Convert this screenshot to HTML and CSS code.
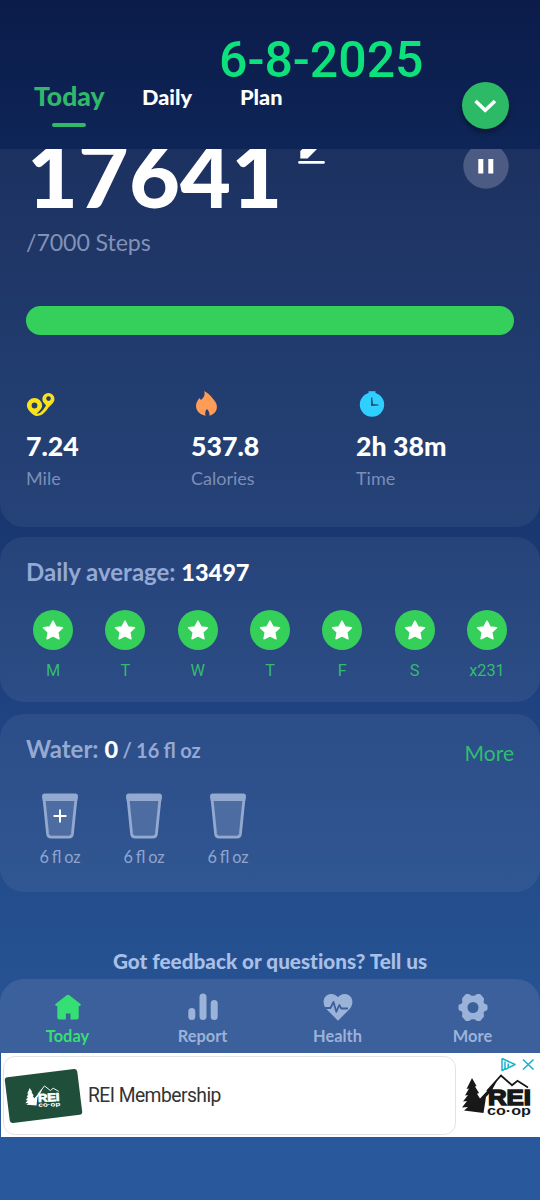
FILE: index.html
```html
<!DOCTYPE html>
<html lang="en">
<head>
<meta charset="utf-8">
<title>Steps</title>
<link rel="stylesheet" href="styles.css">
</head>
<body>
<svg width="0" height="0" class="defs">
  <symbol id="star" viewBox="0 0 40 40"><path d="M20 11l3 5.900 6.500.9-4.700 4.500 1.200 6.500-6-3-6 3 1.200-6.500-4.700-4.500 6.500-.9z" fill="#fff" stroke="#fff" stroke-width="1.400" stroke-linejoin="round"/></symbol>
  <symbol id="glass" viewBox="0 0 36 46"><path d="M3 5H33L29.500 42H6.500z" fill="#4d6ca2"/><path d="M1.800 3.500L5.600 41q.4 3 3.400 3h18q3 0 3.400-3L34.200 3.500" fill="none" stroke="#94a9cf" stroke-width="2.800"/><path d="M3 .5h30q3 0 3 3L35.200 8H.8L0 3.500q0-3 3-3z" fill="#94a9cf"/></symbol>
  <symbol id="rei-peaks" viewBox="0 0 76 44">
    <path d="M27 18L41 2.500l11 9.700 5.500-4.400L68 14.500" fill="none" stroke="currentColor" stroke-width="1.800"/>
    <path d="M12 5l4.500 8-1.500.5 4 6.500-2 .7 3 4.800L29 16l9-10-6.500 12L26 24l-2.500 16L4 37.500l4-3.500-6 .5L7 28l-4 .5L8 22l-3 .5L9 15.500l-2.500.5z" fill="currentColor"/>
  </symbol>
</svg>
<div class="screen">
  <header class="header">
    <div class="date">6-8-2025</div>
    <nav class="tabs">
      <span class="tab active">Today</span>
      <span class="tab daily">Daily</span>
      <span class="tab">Plan</span>
    </nav>
    <button class="expand" aria-label="Expand"><svg width="47" height="47" viewBox="0 0 47 47"><path d="M13.500 19l9.700 9.200L33 19" fill="none" stroke="#fff" stroke-width="3.600"/></svg></button>
  </header>

  <section class="card steps">
    <div class="count-row">
      <div class="count">17641</div>
      <svg class="edit" width="27" height="28" viewBox="0 0 27 28"><path d="M2.300 22.500V15L5 12.500 10 7h15L9.500 22.500z" fill="#fff"/><path d="M1.500 26.400h24" stroke="#fff" stroke-width="2.600" stroke-linecap="round"/></svg>
      <svg class="pause" width="46" height="46" viewBox="0 0 46 46"><circle cx="23" cy="23" r="22.700" fill="#4b5b83"/><path d="M15.300 16h5v14.500h-5zM25.300 16h5v14.500h-5z" fill="#fff"/></svg>
    </div>
    <div class="goal">/7000 Steps</div>
    <div class="progress"></div>
    <div class="metrics">
      <div class="metric">
        <svg width="30" height="30" viewBox="0 0 30 30"><path fill-rule="evenodd" fill="#f9e219" d="M8.500 9a7.600 7.600 0 0 1 7.600 7.600c0 3.500-3.300 6-5.600 8.300 5-.3 7-5 9.700-8.400-2.200-2.300-3.900-4.200-3.900-6.500a6.100 6.100 0 1 1 12.200 0c0 3.600-3.700 6-6.200 8.700-2.500 4-6 8.200-11.600 8.300-3.300 0-9.800-6-9.800-10.400A7.600 7.600 0 0 1 8.500 9zm0 4.600a2.900 2.900 0 1 0 0 5.800 2.900 2.900 0 0 0 0-5.800zM22.500 7.300a2.300 2.300 0 1 0 0 4.600 2.300 2.300 0 0 0 0-4.600z"/></svg>
        <b>7.24</b><span>Mile</span>
      </div>
      <div class="metric">
        <svg width="30" height="30" viewBox="0 0 30 30"><path fill="#ff9c57" d="M13 2c5 2.300 7.500 6 9.600 8.500 2.200 2.500 3.500 5 3.300 8-.3 4.300-3.500 7-7.400 8.200.3-2.500-.6-4.500-2.500-6.600-1.700 1.600-2.200 3.900-1.500 6.700-5-.8-9.500-4.500-9.500-9.700 0-3.500 1.900-6 3.700-8l1.100 2C12.700 9 14.700 5.500 13 2z"/></svg>
        <b>537.8</b><span>Calories</span>
      </div>
      <div class="metric">
        <svg width="30" height="30" viewBox="0 0 30 30"><path d="M12.500 2.200h7v3h-7z" fill="#2fcfff"/><circle cx="16" cy="15.600" r="12.200" fill="#2fcfff"/><path d="M15 8.500L15 17 22.500 16.500V15.500L17 15.100 16.200 8.500z" fill="#22527c"/></svg>
        <b>2h 38m</b><span>Time</span>
      </div>
    </div>
  </section>

  <section class="card average">
    <div class="title">Daily average: <b>13497</b></div>
    <div class="days">
      <div class="day"><svg><use href="#star"/></svg>M</div>
      <div class="day"><svg><use href="#star"/></svg>T</div>
      <div class="day"><svg><use href="#star"/></svg>W</div>
      <div class="day"><svg><use href="#star"/></svg>T</div>
      <div class="day"><svg><use href="#star"/></svg>F</div>
      <div class="day"><svg><use href="#star"/></svg>S</div>
      <div class="day"><svg><use href="#star"/></svg>x231</div>
    </div>
  </section>

  <section class="card water">
    <div class="water-head">
      <div class="title">Water: <b>0</b><small> / 16 fl oz</small></div>
      <span class="more">More</span>
    </div>
    <div class="glasses">
      <div class="glass"><svg viewBox="0 0 36 46"><use href="#glass"/><path d="M11.500 23h13M18 16.500v13" stroke="#fff" stroke-width="2"/></svg>6 fl oz</div>
      <div class="glass"><svg viewBox="0 0 36 46"><use href="#glass"/></svg>6 fl oz</div>
      <div class="glass"><svg viewBox="0 0 36 46"><use href="#glass"/></svg>6 fl oz</div>
    </div>
  </section>

  <div class="feedback">Got feedback or questions? Tell us</div>

  <nav class="bottom">
    <div class="item current"><svg viewBox="0 0 30 28"><path fill="currentColor" d="M13.600 2.200q1.400-1.100 2.800 0L27.500 11q1 1.300-.8 2h-1V24.500q0 2-2 2h-6.200v-6h-4.600v6H6.300q-2 0-2-2V13h-1q-1.800-.7-.8-2z"/></svg>Today</div>
    <div class="item"><svg viewBox="0 0 30 28"><path d="M3.800 18.500v5M15 4v19.500M26.200 10.500v13" stroke="currentColor" stroke-width="7" stroke-linecap="round"/></svg>Report</div>
    <div class="item"><svg viewBox="0 0 30 28"><path fill="currentColor" d="M15 27.700L3.300 16C-2 9.500 1 1.200 8 1c3-.1 5.500 1.200 7 3.300C16.500 2.200 19 .9 22 1c7 .2 10 8.500 4.700 15z"/><path d="M2 15h5.500l3-6 2.800 9.800 3-6.800 2 3.500H25" fill="none" stroke="#3c609b" stroke-width="1.800" stroke-linejoin="round"/></svg>Health</div>
    <div class="item"><svg viewBox="0 0 30 28"><path fill="currentColor" stroke="currentColor" stroke-width="3" stroke-linejoin="round" d="M8.500 2.500h2L13 4.300h4l2.500-1.800h2L24.500 6l-.5 3.500 1.500 2.500 2.500 1v3l-2.500 1-1.500 2.500.5 3.500-3 3.500h-2L17 24.700h-4l-2.500 1.800h-2L5.500 23l.5-3.500L4.500 17 2 16v-3l2.500-1L6 9.500 5.500 6z"/><circle cx="15" cy="14.500" r="5.500" fill="#3c609b"/></svg>More</div>
  </nav>

  <aside class="ad">
    <div class="offer">
      <div class="giftcard"><svg width="39" height="24" viewBox="0 0 76 44"><use href="#rei-peaks"/><text x="27" y="33" textLength="42" lengthAdjust="spacingAndGlyphs" class="rei-name">REI</text><text x="27" y="43" textLength="43" lengthAdjust="spacingAndGlyphs" class="rei-sub">co·op</text></svg></div>
      <span>REI Membership</span>
    </div>
    <div class="brand">
      <svg class="choices" width="36" height="15" viewBox="0 0 36 15"><path d="M2 1.500v12l3-1.500V4.500M2 1.500l13 6-10 5" fill="none" stroke="#1bb0ca" stroke-width="1.500" stroke-linejoin="round"/><path d="M8.300 6.500v4M8.300 4v1.200M23 2.500l10.500 10M33.500 2.500L23 12.500" stroke="#1bb0ca" stroke-width="1.600"/></svg>
      <svg class="logo" width="76" height="44" viewBox="0 0 76 44"><use href="#rei-peaks"/><text x="28" y="32" textLength="43" lengthAdjust="spacingAndGlyphs" class="rei-name">REI</text><text x="27" y="41.500" textLength="44" lengthAdjust="spacingAndGlyphs" class="rei-sub">co·op</text></svg>
    </div>
  </aside>
</div>
</body>
</html>
```

FILE: styles.css
```css
* { box-sizing: border-box; }
body { margin: 0; font-family: Lato, sans-serif; color: #fff; }
svg { display: block; flex: none; }
.defs { position: absolute; }
.screen {
  width: 540px; height: 1200px; overflow: hidden;
  background: linear-gradient(#0b1c4a 0, #0e2557 149px, #193871 532px, #1f4280 708px, #25508f 940px, #29599c 1137px);
  display: flex; flex-direction: column;
}
.header { height: 149px; flex: none; position: relative; padding: 37px 0 0 34px; }
.date { font: 500 50px/46px Roboto, sans-serif; height: 44px; color: #0ce17b; margin-left: 185px; white-space: nowrap; }
.tabs { display: flex; align-items: center; height: 30px; line-height: 30px; }
.tab { font-size: 21.700px; font-weight: 900; width: 80px; padding-top: 1px; }
.tab.active { font-size: 26.500px; width: 108px; height: 30px; color: #31b86a; padding-top: 0; }
.tab.active::after { content: ""; display: block; width: 34px; height: 4px; margin: 12px 0 0 18px; border-radius: 2px; background: #31b86a; }
.tab.daily { width: 98px; }
.expand { position: absolute; left: 462px; top: 82px; width: 47px; height: 47px; padding: 0; border: 0; border-radius: 50%; background: #2dba66; box-shadow: 0 3px 5px rgba(0,0,0,.4); }

.card { flex: none; background: rgba(255,255,255,.06); border-radius: 24px; padding: 0 26px; }
.steps { height: 378px; border-radius: 0 0 24px 24px; overflow: hidden; }
.count-row { display: flex; margin-top: -26px; height: 104px; }
.count { font-size: 88px; font-weight: 900; line-height: 102px; width: 272px; padding-left: 1px; }
.edit { margin-top: 13px; }
.pause { margin: 20px 0 0 138px; }
.goal { font-size: 23.200px; line-height: 30px; letter-spacing: -.1px; color: #8292b7; }
.progress { height: 29px; margin-top: 49px; border-radius: 15px; background: #35d05b; }
.metrics { display: grid; grid-template-columns: 165px 165px 1fr; margin-top: 54px; }
.metric { display: flex; flex-direction: column; }
.metric b { font-size: 26.700px; font-weight: 900; line-height: 34px; margin-top: 10px; }
.metric span { font-size: 18px; line-height: 24px; color: #7c8eb8; margin-top: 3px; }

.average { height: 165px; margin-top: 10px; padding-top: 20px; }
.title { font-size: 24px; line-height: 30px; font-weight: 700; color: #94a9d3; }
.title b { font-size: 23.500px; font-weight: 900; color: #fff; }
.title small { font-size: 20px; word-spacing: -.5px; }
.days { display: grid; grid-template-columns: repeat(7, 72.300px); margin: 23px 0 0 -9px; }
.day { display: flex; flex-direction: column; align-items: center; font: 16.300px/25px Roboto, sans-serif; color: #34bb6e; }
.day svg { width: 40px; height: 40px; border-radius: 50%; background: #34d05a; margin-bottom: 8px; }

.water { height: 178px; margin-top: 12px; padding-top: 20px; }
.water-head { display: flex; justify-content: space-between; }
.more { font-size: 21px; line-height: 38px; color: #31bd70; }
.glasses { display: flex; margin: 21px 0 0 -8px; }
.glass { width: 84px; display: flex; flex-direction: column; align-items: center; font-size: 16.300px; line-height: 25px; word-spacing: -1.300px; color: #8fa5cf; }
.glass svg { width: 36px; height: 46px; margin-bottom: 5px; }

.feedback { margin-top: 55px; text-align: center; font-size: 20.700px; line-height: 28px; font-weight: 900; font-variant-ligatures: none; color: #a8bfe6; }
.bottom { height: 74px; flex: none; margin-top: 4px; padding-top: 14px; border-radius: 24px 24px 0 0; background: #3c609b; display: grid; grid-template-columns: repeat(4, 1fr); }
.item { display: flex; flex-direction: column; align-items: center; font-size: 16.400px; line-height: 24px; font-weight: 700; color: #9bb2d9; }
.item svg { width: 30px; height: 28px; margin-bottom: 3px; }
.item.current { color: #34df74; }

.ad { height: 84px; flex: none; margin-left: 1px; background: #fff; display: flex; color: #333; padding: 3px 0 2px 2px; }
.offer { width: 453px; border: 1px solid #e2e3e5; border-radius: 12px; display: flex; align-items: center; font: 19.300px/26px Roboto, sans-serif; letter-spacing: -.55px; }
.giftcard { width: 73px; height: 46px; margin: 0 9px 0 3px; border-radius: 3px; background: #1f4e3b; color: #fff; display: flex; align-items: center; justify-content: center; transform: rotate(-7deg); letter-spacing: 0; }
.giftcard svg { transform: rotate(4deg); }
.offer span { margin-left: -1px; }
.brand { width: 84px; }
.choices { margin: 1px 0 0 44px; }
.logo { margin: 1px 0 0 4px; color: #181818; }
.rei-name { font: 900 22px "Liberation Sans", sans-serif; fill: currentColor; stroke: currentColor; stroke-width: 1.500px; }
.rei-sub { font: 700 12px "Liberation Sans", sans-serif; fill: currentColor; }
```
